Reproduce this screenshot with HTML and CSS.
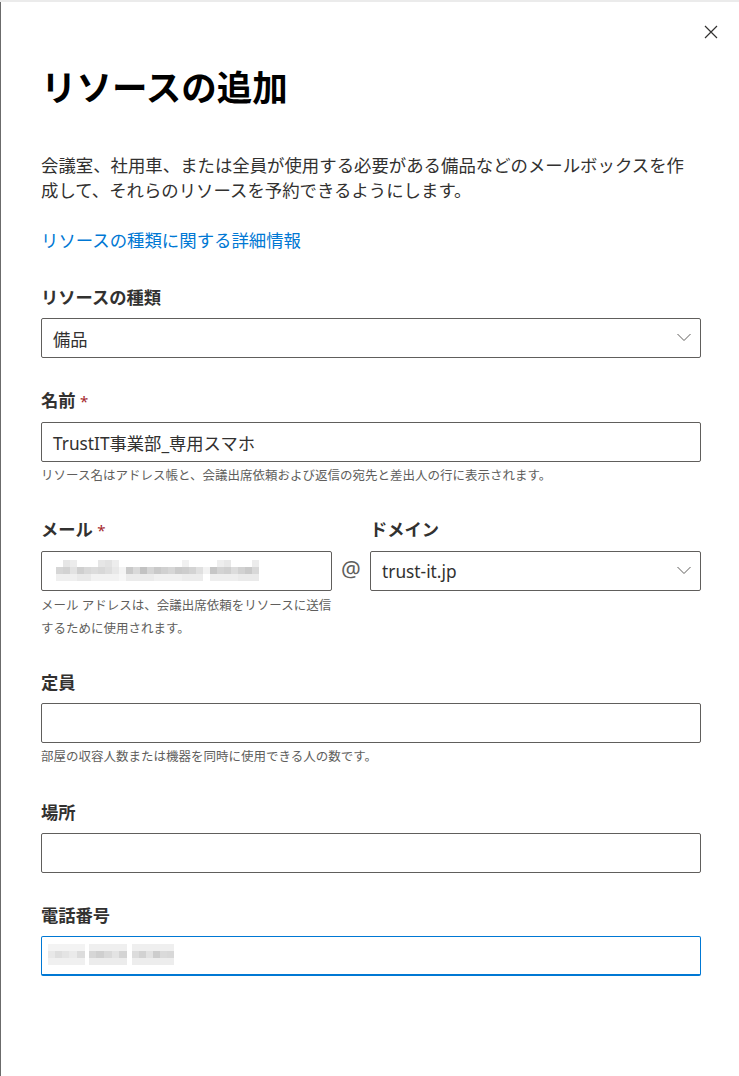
FILE: index.html
```html
<!DOCTYPE html>
<html lang="ja">
<head>
    <meta charset="UTF-8">
    <title>リソースの追加</title>
    <link rel="stylesheet" href="styles.css">
</head>
<body>
<div class="topbar"></div>
<div class="panel">
    <div class="panel-head">
        <button class="close" aria-label="閉じる">
            <svg width="14" height="14" viewBox="0 0 14 14"><path d="M1 1L13 13M13 1L1 13" stroke="#323130" stroke-width="1.2" fill="none"/></svg>
        </button>
    </div>
    <h1 class="title">リソースの追加</h1>
    <p class="desc">会議室、社用車、または全員が使用する必要がある備品などのメールボックスを作成して、それらのリソースを予約できるようにします。</p>
    <a class="more" href="javascript:;">リソースの種類に関する詳細情報</a>

    <!--リソースの種類-->
    <div class="field">
        <div class="label">リソースの種類</div>
        <div class="box select">
            <span>備品</span>
            <svg class="chev" width="16" height="16" viewBox="0 0 16 16"><path d="M1.5 5L8 11.5L14.5 5" stroke="#605e5c" stroke-width="1" fill="none"/></svg>
        </div>
    </div>

    <!--名前-->
    <div class="field">
        <div class="label">名前 <span class="req">*</span></div>
        <div class="box"><span>TrustIT事業部_専用スマホ</span></div>
        <div class="help">リソース名はアドレス帳と、会議出席依頼および返信の宛先と差出人の行に表示されます。</div>
    </div>

    <!--メール / ドメイン-->
    <div class="field mail">
        <div class="label">メール <span class="req">*</span></div>
        <div></div>
        <div class="label">ドメイン</div>
        <div class="box">
            <svg class="mosaic" width="210" height="24" viewBox="0 0 210 24">
                <rect x="-3" y="5" width="3" height="1" fill="#555"/>
                <g fill="#e6e6e6">
                    <rect x="7" y="1" width="7" height="7"/><rect x="14" y="1" width="7" height="7" fill="#ececec"/>
                    <rect x="42" y="1" width="7" height="7"/><rect x="49" y="1" width="7" height="7" fill="#e2e2e2"/><rect x="56" y="1" width="7" height="7" fill="#ededed"/>
                    <rect x="126" y="1" width="7" height="7" fill="#f1f1f1"/>
                    <rect x="161" y="1" width="7" height="7" fill="#eeeeee"/><rect x="168" y="1" width="7" height="7" fill="#e8e8e8"/>
                    <rect x="196" y="1" width="7" height="7" fill="#ececec"/>
                </g>
                <rect x="0" y="8" width="7" height="7" fill="#d6d6d6"/><rect x="7" y="8" width="7" height="7" fill="#d2d2d2"/>
                <rect x="14" y="8" width="7" height="7" fill="#e2e2e2"/><rect x="21" y="8" width="7" height="7" fill="#cfcfcf"/>
                <rect x="28" y="8" width="7" height="7" fill="#d8d8d8"/><rect x="35" y="8" width="7" height="7" fill="#dcdcdc"/>
                <rect x="42" y="8" width="7" height="7" fill="#d8d8d8"/><rect x="49" y="8" width="7" height="7" fill="#dedede"/>
                <rect x="56" y="8" width="7" height="7" fill="#e8e8e8"/><rect x="63" y="8" width="7" height="7" fill="#f4f4f4"/>
                <rect x="70" y="8" width="7" height="7" fill="#c9c9c9"/><rect x="77" y="8" width="7" height="7" fill="#d9d9d9"/>
                <rect x="84" y="8" width="7" height="7" fill="#c2c2c2"/><rect x="91" y="8" width="7" height="7" fill="#d5d5d5"/>
                <rect x="98" y="8" width="7" height="7" fill="#c9c9c9"/><rect x="105" y="8" width="7" height="7" fill="#d0d0d0"/>
                <rect x="112" y="8" width="7" height="7" fill="#d6d6d6"/><rect x="119" y="8" width="7" height="7" fill="#cacaca"/>
                <rect x="126" y="8" width="7" height="7" fill="#cdcdcd"/><rect x="133" y="8" width="7" height="7" fill="#d3d3d3"/>
                <rect x="140" y="8" width="7" height="7" fill="#e0e0e0"/><rect x="147" y="8" width="7" height="7" fill="#f2f2f2"/>
                <rect x="154" y="8" width="7" height="7" fill="#c6c6c6"/><rect x="161" y="8" width="7" height="7" fill="#d3d3d3"/>
                <rect x="168" y="8" width="7" height="7" fill="#cfcfcf"/><rect x="175" y="8" width="7" height="7" fill="#dcdcdc"/>
                <rect x="182" y="8" width="7" height="7" fill="#d1d1d1"/><rect x="189" y="8" width="7" height="7" fill="#c9c9c9"/>
                <rect x="196" y="8" width="7" height="7" fill="#d8d8d8"/>
                <g fill="#efefef">
                    <rect x="0" y="15" width="21" height="7"/><rect x="21" y="15" width="14" height="7" fill="#e9e9e9"/>
                    <rect x="35" y="15" width="28" height="7" fill="#f2f2f2"/><rect x="63" y="15" width="7" height="7" fill="#f7f7f7"/>
                    <rect x="70" y="15" width="28" height="7" fill="#ebebeb"/><rect x="98" y="15" width="28" height="7" fill="#f0f0f0"/>
                    <rect x="126" y="15" width="21" height="7" fill="#ececec"/><rect x="154" y="15" width="28" height="7" fill="#eeeeee"/>
                    <rect x="182" y="15" width="21" height="7" fill="#eaeaea"/>
                </g>
            </svg>
        </div>
        <div class="at">@</div>
        <div class="box select">
            <span>trust-it.jp</span>
            <svg class="chev" width="16" height="16" viewBox="0 0 16 16"><path d="M1.5 5L8 11.5L14.5 5" stroke="#605e5c" stroke-width="1" fill="none"/></svg>
        </div>
        <div class="help help-2">メール アドレスは、会議出席依頼をリソースに送信するために使用されます。</div>
    </div>

    <!--定員-->
    <div class="field">
        <div class="label">定員</div>
        <div class="box"></div>
        <div class="help">部屋の収容人数または機器を同時に使用できる人の数です。</div>
    </div>

    <!--場所-->
    <div class="field">
        <div class="label">場所</div>
        <div class="box"></div>
    </div>

    <!--電話番号-->
    <div class="field">
        <div class="label">電話番号</div>
        <div class="box focus">
            <svg class="mosaic phone" width="130" height="24" viewBox="0 0 130 24">
                <rect x="0" y="1" width="37" height="7" fill="#f3f3f3"/>
                <rect x="0" y="8" width="7" height="7" fill="#e8e8e8"/><rect x="7" y="8" width="7" height="7" fill="#dedede"/>
                <rect x="14" y="8" width="7" height="7" fill="#e4e4e4"/><rect x="21" y="8" width="8" height="7" fill="#eaeaea"/>
                <rect x="29" y="8" width="8" height="7" fill="#dcdcdc"/>
                <rect x="0" y="15" width="37" height="7" fill="#f0f0f0"/>
                <rect x="41" y="1" width="38" height="7" fill="#efefef"/>
                <rect x="41" y="8" width="7" height="7" fill="#d6d6d6"/><rect x="48" y="8" width="8" height="7" fill="#cfcfcf"/>
                <rect x="56" y="8" width="8" height="7" fill="#d9d9d9"/><rect x="64" y="8" width="7" height="7" fill="#e3e3e3"/>
                <rect x="71" y="8" width="8" height="7" fill="#d4d4d4"/>
                <rect x="41" y="15" width="38" height="7" fill="#ececec"/>
                <rect x="84" y="1" width="42" height="7" fill="#efefef"/>
                <rect x="84" y="8" width="7" height="7" fill="#dcdcdc"/><rect x="91" y="8" width="7" height="7" fill="#d2d2d2"/>
                <rect x="98" y="8" width="7" height="7" fill="#e2e2e2"/><rect x="105" y="8" width="7" height="7" fill="#cdcdcd"/>
                <rect x="112" y="8" width="7" height="7" fill="#dadada"/><rect x="119" y="8" width="7" height="7" fill="#d8d8d8"/>
                <rect x="84" y="15" width="42" height="7" fill="#ededed"/>
            </svg>
        </div>
    </div>
</div>
</body>
</html>
```

FILE: styles.css
```css
/*reset*/
body,h1,p{margin:0;padding:0}
body{
    font-family: "Noto Sans", "Noto Sans CJK JP", sans-serif;
    color: #323130;
    background: #fff;
}
a{text-decoration:none}

.topbar{
    height:2px;
    background:#ebebeb;
}
.panel{
    border-left:1px solid #6b6b6b;
    padding:0 38px 0 40px;
    min-height:1074px;
    box-sizing:border-box;
}
.panel-head{
    display:flex;
    justify-content:flex-end;
    padding-top:20px;
    margin-right:-20px;
}
.close{
    width:20px;
    height:20px;
    padding:0;
    border:0;
    background:none;
    display:flex;
    align-items:center;
    justify-content:center;
    cursor:pointer;
}
.title{
    margin-top:23px;
    font-size:35.5px;
    line-height:44px;
    font-weight:700;
    color:#000;
}
.desc{
    margin-top:44px;
    max-width:650px;
    font-size:17.4px;
    line-height:25px;
}
.more{
    display:block;
    margin-top:25px;
    padding-bottom:2px;
    font-size:17.4px;
    line-height:25px;
    color:#0078d4;
}

/*fields*/
.field{
    margin-top:30px;
}
.label{
    font-size:17.3px;
    line-height:25px;
    font-weight:700;
    margin-bottom:8px;
}
.req{
    color:#a4262c;
    font-weight:400;
    font-size:15px;
}
.box{
    height:40px;
    box-sizing:border-box;
    border:1px solid #605e5c;
    border-radius:2px;
    padding:0 11px;
    display:flex;
    align-items:center;
    font-size:17.3px;
}
.select{
    justify-content:space-between;
    padding-right:8px;
}
.chev{
    margin-top:-2px;
}
.focus{
    border-color:#0078d4;
    border-bottom-width:2px;
    padding-left:6px;
}
.mosaic{
    margin-left:3px;
    margin-top:-1px;
}
.phone{
    margin-left:0;
}
.help{
    margin-top:5px;
    padding-bottom:4px;
    font-size:12.5px;
    line-height:18px;
    color:#605e5c;
}
.help-2{
    margin-top:4px;
    line-height:22.5px;
    padding-bottom:0;
}

.mail{
    display:grid;
    grid-template-columns:291px 38px 1fr;
    margin-top:28px;
}
.mail .help{
    grid-column:1;
}
.at{
    display:flex;
    justify-content:center;
    align-items:center;
    padding-bottom:6px;
    font-size:22px;
    color:#605e5c;
}
```
